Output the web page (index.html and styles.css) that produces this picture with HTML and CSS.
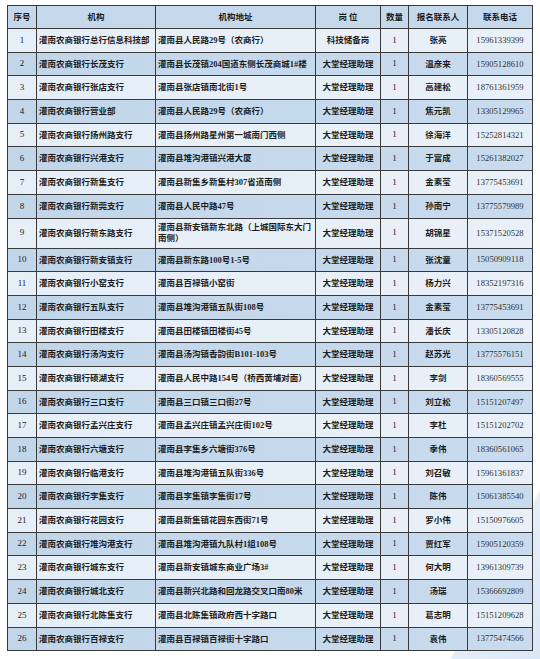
FILE: index.html
```html
<!DOCTYPE html>
<html lang="zh">
<head>
<meta charset="utf-8">
<title>灌南农商银行 大堂经理助理 招聘</title>
<link rel="stylesheet" href="styles.css">
</head>
<body>
<table class="grid">
  <colgroup>
    <col class="c-no"><col class="c-org"><col class="c-addr"><col class="c-pos"><col class="c-num"><col class="c-person"><col class="c-tel">
  </colgroup>
  <thead>
    <tr class="head"><th>序号</th><th>机构</th><th>机构地址</th><th>岗 位</th><th>数量</th><th>报名联系人</th><th>联系电话</th></tr>
  </thead>
  <tbody>
    <tr><td class="no">1</td><td class="org">灌南农商银行总行信息科技部</td><td class="addr">灌南县人民路29号（农商行）</td><td class="pos">科技储备岗</td><td class="num">1</td><td class="person">张亮</td><td class="tel">15961339399</td></tr>
    <tr><td class="no">2</td><td class="org">灌南农商银行长茂支行</td><td class="addr">灌南县长茂镇204国道东侧长茂商城1#楼</td><td class="pos">大堂经理助理</td><td class="num">1</td><td class="person">温彦来</td><td class="tel">15905128610</td></tr>
    <tr><td class="no">3</td><td class="org">灌南农商银行张店支行</td><td class="addr">灌南县张店镇南北街1号</td><td class="pos">大堂经理助理</td><td class="num">1</td><td class="person">高建松</td><td class="tel">18761361959</td></tr>
    <tr><td class="no">4</td><td class="org">灌南农商银行营业部</td><td class="addr">灌南县人民路29号（农商行）</td><td class="pos">大堂经理助理</td><td class="num">1</td><td class="person">焦元凯</td><td class="tel">13305129965</td></tr>
    <tr><td class="no">5</td><td class="org">灌南农商银行扬州路支行</td><td class="addr">灌南县扬州路星州第一城南门西侧</td><td class="pos">大堂经理助理</td><td class="num">1</td><td class="person">徐海洋</td><td class="tel">15252814321</td></tr>
    <tr><td class="no">6</td><td class="org">灌南农商银行兴港支行</td><td class="addr">灌南县堆沟港镇兴港大厦</td><td class="pos">大堂经理助理</td><td class="num">1</td><td class="person">于富成</td><td class="tel">15261382027</td></tr>
    <tr><td class="no">7</td><td class="org">灌南农商银行新集支行</td><td class="addr">灌南县新集乡新集村307省道南侧</td><td class="pos">大堂经理助理</td><td class="num">1</td><td class="person">金素莹</td><td class="tel">13775453691</td></tr>
    <tr><td class="no">8</td><td class="org">灌南农商银行新莞支行</td><td class="addr">灌南县人民中路47号</td><td class="pos">大堂经理助理</td><td class="num">1</td><td class="person">孙南宁</td><td class="tel">13775579989</td></tr>
    <tr class="tall"><td class="no">9</td><td class="org">灌南农商银行新东路支行</td><td class="addr">灌南县新安镇新东北路（上城国际东大门<br>南侧）</td><td class="pos">大堂经理助理</td><td class="num">1</td><td class="person">胡锦星</td><td class="tel">15371520528</td></tr>
    <tr><td class="no">10</td><td class="org">灌南农商银行新安镇支行</td><td class="addr">灌南县新东路100号1-5号</td><td class="pos">大堂经理助理</td><td class="num">1</td><td class="person">张沈童</td><td class="tel">15050909118</td></tr>
    <tr><td class="no">11</td><td class="org">灌南农商银行小窑支行</td><td class="addr">灌南县百禄镇小窑街</td><td class="pos">大堂经理助理</td><td class="num">1</td><td class="person">杨力兴</td><td class="tel">18352197316</td></tr>
    <tr><td class="no">12</td><td class="org">灌南农商银行五队支行</td><td class="addr">灌南县堆沟港镇五队街108号</td><td class="pos">大堂经理助理</td><td class="num">1</td><td class="person">金素莹</td><td class="tel">13775453691</td></tr>
    <tr><td class="no">13</td><td class="org">灌南农商银行田楼支行</td><td class="addr">灌南县田楼镇田楼街45号</td><td class="pos">大堂经理助理</td><td class="num">1</td><td class="person">潘长庆</td><td class="tel">13305120828</td></tr>
    <tr><td class="no">14</td><td class="org">灌南农商银行汤沟支行</td><td class="addr">灌南县汤沟镇香韵街B101-103号</td><td class="pos">大堂经理助理</td><td class="num">1</td><td class="person">赵苏光</td><td class="tel">13775576151</td></tr>
    <tr><td class="no">15</td><td class="org">灌南农商银行硕湖支行</td><td class="addr">灌南县人民中路154号（桥西黄埔对面）</td><td class="pos">大堂经理助理</td><td class="num">1</td><td class="person">李剑</td><td class="tel">18360569555</td></tr>
    <tr><td class="no">16</td><td class="org">灌南农商银行三口支行</td><td class="addr">灌南县三口镇三口街27号</td><td class="pos">大堂经理助理</td><td class="num">1</td><td class="person">刘立松</td><td class="tel">15151207497</td></tr>
    <tr><td class="no">17</td><td class="org">灌南农商银行孟兴庄支行</td><td class="addr">灌南县孟兴庄镇孟兴庄街102号</td><td class="pos">大堂经理助理</td><td class="num">1</td><td class="person">李杜</td><td class="tel">15151202702</td></tr>
    <tr><td class="no">18</td><td class="org">灌南农商银行六塘支行</td><td class="addr">灌南县李集乡六塘街376号</td><td class="pos">大堂经理助理</td><td class="num">1</td><td class="person">季伟</td><td class="tel">18360561065</td></tr>
    <tr><td class="no">19</td><td class="org">灌南农商银行临港支行</td><td class="addr">灌南县堆沟港镇五队街336号</td><td class="pos">大堂经理助理</td><td class="num">1</td><td class="person">刘召敏</td><td class="tel">15961361837</td></tr>
    <tr><td class="no">20</td><td class="org">灌南农商银行李集支行</td><td class="addr">灌南县李集镇李集街17号</td><td class="pos">大堂经理助理</td><td class="num">1</td><td class="person">陈伟</td><td class="tel">15061385540</td></tr>
    <tr><td class="no">21</td><td class="org">灌南农商银行花园支行</td><td class="addr">灌南县新集镇花园东西街71号</td><td class="pos">大堂经理助理</td><td class="num">1</td><td class="person">罗小伟</td><td class="tel">15150976605</td></tr>
    <tr><td class="no">22</td><td class="org">灌南农商银行堆沟港支行</td><td class="addr">灌南县堆沟港镇九队村1组108号</td><td class="pos">大堂经理助理</td><td class="num">1</td><td class="person">贾红军</td><td class="tel">15905120359</td></tr>
    <tr><td class="no">23</td><td class="org">灌南农商银行城东支行</td><td class="addr">灌南县新安镇城东商业广场3#</td><td class="pos">大堂经理助理</td><td class="num">1</td><td class="person">何大明</td><td class="tel">13961309739</td></tr>
    <tr><td class="no">24</td><td class="org">灌南农商银行城北支行</td><td class="addr">灌南县新兴北路和回龙路交叉口南80米</td><td class="pos">大堂经理助理</td><td class="num">1</td><td class="person">汤瑞</td><td class="tel">15366692809</td></tr>
    <tr><td class="no">25</td><td class="org">灌南农商银行北陈集支行</td><td class="addr">灌南县北陈集镇政府西十字路口</td><td class="pos">大堂经理助理</td><td class="num">1</td><td class="person">葛志明</td><td class="tel">15151209628</td></tr>
    <tr><td class="no">26</td><td class="org">灌南农商银行百禄支行</td><td class="addr">灌南县百禄镇百禄街十字路口</td><td class="pos">大堂经理助理</td><td class="num">1</td><td class="person">袁伟</td><td class="tel">13775474566</td></tr>
  </tbody>
</table>
</body>
</html>
```

FILE: styles.css
```css
html {
  background:
    linear-gradient(118deg, rgba(255,255,255,0) 55%, #e4eef9 56%, #d9e8f6 100%) right bottom / 100px 190px no-repeat,
    #ffffff;
  min-height: 100%;
}
body {
  margin: 0;
  padding: 5px 0 0 7px;
  font-family: "Liberation Serif", "Noto Sans CJK SC", serif;
  color: #1e1e1e;
}
.grid {
  width: 525px;
  table-layout: fixed;
  border-collapse: collapse;
  border: 1px solid #3a3a3a;
  font-size: 8.5px;
  line-height: 1.25;
}
.c-no { width: 29px; }
.c-org { width: 119px; }
.c-addr { width: 160px; }
.c-pos { width: 65px; }
.c-num { width: 28px; }
.c-person { width: 59px; }
.c-tel { width: 65px; }

.grid th,
.grid td {
  border: 1px solid #3a3a3a;
  padding: 0 2px;
  vertical-align: middle;
  white-space: nowrap;
  overflow: hidden;
}
.grid thead tr { height: 23px; background: #c6d9ec; }
.grid th { font-weight: 700; text-align: center; color: #1a1a1a; }
.grid tbody tr { height: 23.7px; }
.grid tbody tr.tall { height: 30px; }
.grid tbody tr:nth-child(odd) { background: linear-gradient(90deg, #e6eef7, #e9f0f8); }
.grid tbody tr:nth-child(even) { background: linear-gradient(90deg, #c2d6ea, #c9dbee); }

.no, .num { text-align: center; font-weight: 400; font-size: 9px; color: #222; }
.org, .addr { text-align: left; font-weight: 700; padding-left: 3px; }
.pos, .person { text-align: center; font-weight: 700; }
.tel { text-align: center; font-weight: 400; color: #333; font-size: 8.6px; }
```
